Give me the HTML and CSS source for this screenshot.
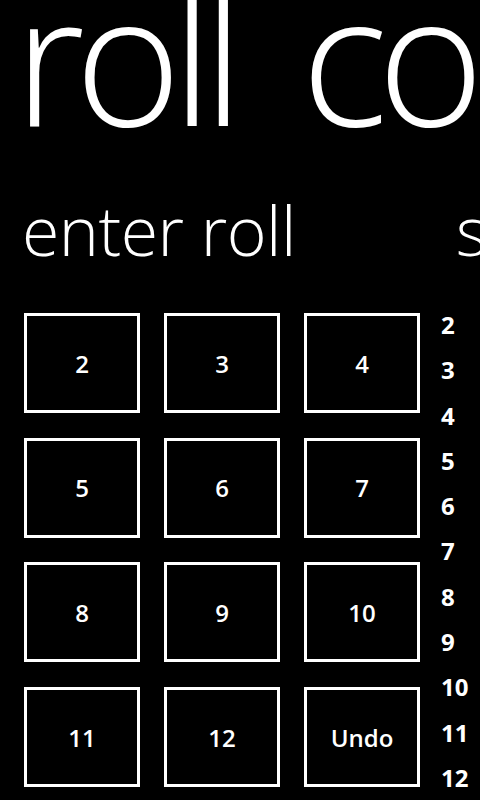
FILE: index.html
```html
<!DOCTYPE html>
<html>
<head>
<meta charset="utf-8">
<link rel="stylesheet" href="styles.css">
</head>
<body>
<div class="pano">
  <h1 class="title">roll counter</h1>
  <div class="headers">
    <h2 class="item-header">enter roll</h2>
    <h2 class="item-header second">stats</h2>
  </div>
  <div class="content">
    <div class="pad">
      <div class="btn">2</div>
      <div class="btn">3</div>
      <div class="btn">4</div>
      <div class="btn">5</div>
      <div class="btn">6</div>
      <div class="btn">7</div>
      <div class="btn">8</div>
      <div class="btn">9</div>
      <div class="btn">10</div>
      <div class="btn">11</div>
      <div class="btn">12</div>
      <div class="btn">Undo</div>
    </div>
    <ul class="stats">
      <li>2</li><li>3</li><li>4</li><li>5</li><li>6</li><li>7</li>
      <li>8</li><li>9</li><li>10</li><li>11</li><li>12</li>
    </ul>
  </div>
</div>
</body>
</html>
```

FILE: styles.css
```css
html, body {
  margin: 0;
  padding: 0;
  background: #000;
  color: #fff;
  width: 480px;
  height: 800px;
  overflow: hidden;
  font-family: "Open Sans", "Noto Sans", sans-serif;
}
.pano {
  width: 480px;
  height: 800px;
  overflow: hidden;
}
.title {
  margin: -36px 0 0 14px;
  height: 182px;
  font-size: 182px;
  font-weight: 300;
  line-height: 1;
  white-space: nowrap;
  letter-spacing: -10px;
  word-spacing: 30px;
}
.headers {
  display: flex;
  gap: 160px;
  margin-top: 50px;
  padding-left: 22px;
  white-space: nowrap;
}
.item-header {
  margin: 0;
  font-size: 68px;
  font-weight: 300;
  line-height: 1;
  letter-spacing: -0.5px;
}
.content {
  display: flex;
  margin-top: 49px;
  padding-left: 24px;
}
.pad {
  display: grid;
  grid-template-columns: repeat(3, 116px);
  grid-auto-rows: 100px;
  column-gap: 24px;
  row-gap: 24.7px;
  flex: none;
}
.btn {
  box-sizing: border-box;
  border: 3px solid #fff;
  display: flex;
  align-items: center;
  justify-content: center;
  font-size: 24px;
  font-weight: 600;
}
.stats {
  list-style: none;
  margin: -11px 0 0 21px;
  padding: 0;
  font-size: 24px;
  font-weight: 700;
  line-height: 45.3px;
}
```
